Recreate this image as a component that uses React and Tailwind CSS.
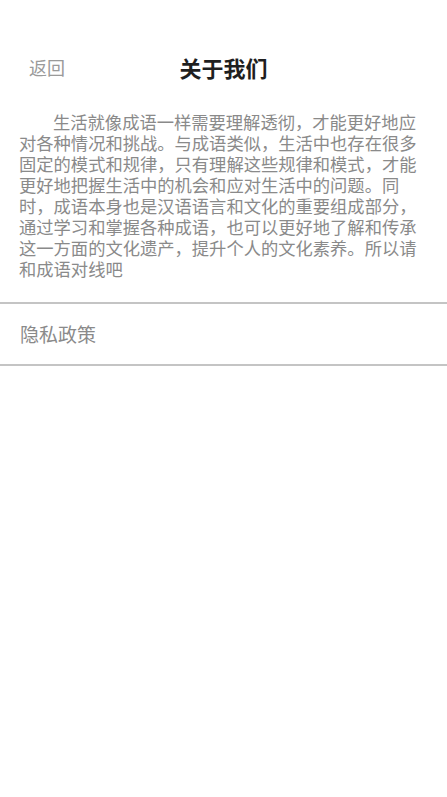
export default function App() {
  const lines = [
    "生活就像成语一样需要理解透彻，才能更好地应",
    "对各种情况和挑战。与成语类似，生活中也存在很多",
    "固定的模式和规律，只有理解这些规律和模式，才能",
    "更好地把握生活中的机会和应对生活中的问题。同",
    "时，成语本身也是汉语语言和文化的重要组成部分，",
    "通过学习和掌握各种成语，也可以更好地了解和传承",
    "这一方面的文化遗产，提升个人的文化素养。所以请",
    "和成语对线吧",
  ];
  return (
    <div
      className="w-[447px] h-[797px] bg-white overflow-hidden"
      style={{ fontFamily: '"Noto Sans CJK SC", "Noto Sans", sans-serif' }}
    >
      <div className="relative mt-[47px] h-[40px] flex items-center justify-center">
        <span className="absolute left-[29px] text-[18px] leading-[40px] text-[#9a9a9a]">返回</span>
        <span className="text-[22px] font-bold leading-[40px] text-[#1f1f1f]">关于我们</span>
      </div>
      <div className="mt-[24px] pl-[19px] text-[17.3px] leading-[21px] text-[#8a8a8a]">
        {lines.map((l, i) => (
          <div key={i} className={"whitespace-nowrap" + (i === 0 ? " pl-[34px]" : "")}>
            {l}
          </div>
        ))}
      </div>
      <div className="mt-[23px] h-[64px] border-y-2 border-[#c4c4c4] flex items-center pl-[20px]">
        <span className="text-[19px] text-[#8a8a8a]">隐私政策</span>
      </div>
    </div>
  );
}
